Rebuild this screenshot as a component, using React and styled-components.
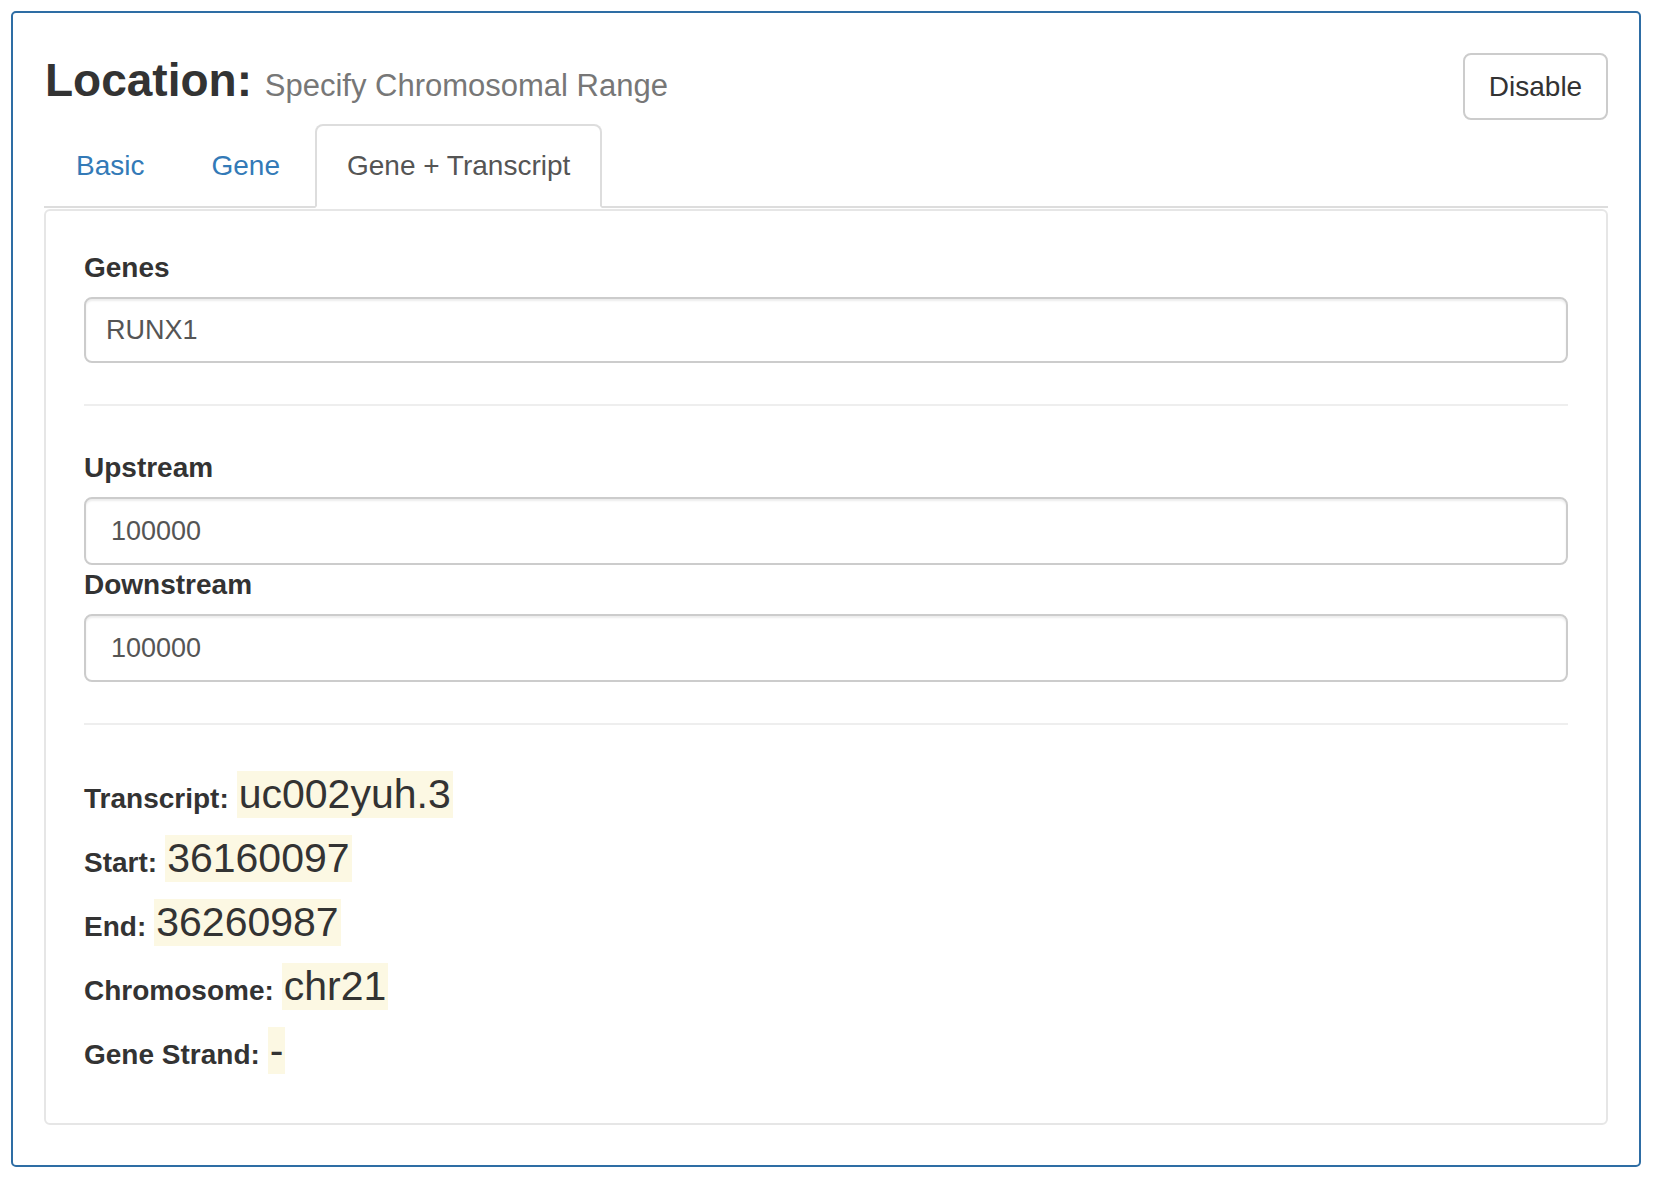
import React from 'react';
import styled, { createGlobalStyle } from 'styled-components';

const GlobalStyle = createGlobalStyle`
  body {
    margin: 0;
    background: #fff;
    font-family: "Liberation Sans", Arial, sans-serif;
    color: #333;
  }
  * { box-sizing: border-box; }
`;

const rows = [
  { label: 'Transcript:', value: 'uc002yuh.3' },
  { label: 'Start:', value: '36160097' },
  { label: 'End:', value: '36260987' },
  { label: 'Chromosome:', value: 'chr21' },
  { label: 'Gene Strand:', value: '-' },
];

export default function App() {
  return (
    <>
      <GlobalStyle />
      <Box>
        <Header>
          <Title>
            Location: <Small>Specify Chromosomal Range</Small>
          </Title>
          <Button type="button">Disable</Button>
        </Header>

        <Tabs>
          <Tab><TabLink href="#">Basic</TabLink></Tab>
          <Tab><TabLink href="#">Gene</TabLink></Tab>
          <Tab><TabLink href="#" $active>Gene + Transcript</TabLink></Tab>
        </Tabs>

        <Panel>
          <Label>Genes</Label>
          <Input defaultValue="RUNX1" />

          <Divider />

          <Label>Upstream</Label>
          <Input defaultValue="100000" $num />
          <Label>Downstream</Label>
          <Input defaultValue="100000" $num />

          <Divider />

          <Details>
            {rows.map((r) => (
              <Row key={r.label}>
                <b>{r.label}</b>
                <Mark>{r.value}</Mark>
              </Row>
            ))}
          </Details>
        </Panel>
      </Box>
    </>
  );
}

const Box = styled.div`
  margin: 11px 15px 0 11px;
  border: 2px solid #2e6da4;
  border-radius: 5px;
  padding: 40px 31px 40px 31px;
`;

const Header = styled.div`
  display: flex;
  justify-content: space-between;
  align-items: flex-start;
`;

const Title = styled.h3`
  margin: 2px 0 0 1px;
  font-size: 46px;
  line-height: 50px;
  font-weight: bold;
  color: #333;
`;

const Small = styled.small`
  font-size: 31px;
  font-weight: normal;
  color: #777;
`;

const Button = styled.button`
  width: 145px;
  height: 67px;
  font-family: inherit;
  font-size: 28px;
  color: #333;
  background: #fff;
  border: 2px solid #ccc;
  border-radius: 8px;
  cursor: pointer;
`;

const Tabs = styled.ul`
  display: flex;
  list-style: none;
  margin: 4px 0 0;
  padding: 0;
  border-bottom: 2px solid #ddd;
`;

const Tab = styled.li`
  margin: 0 3px -2px 0;
`;

const TabLink = styled.a`
  display: block;
  padding: 20px 30px;
  line-height: 40px;
  font-size: 28px;
  text-decoration: none;
  border: 2px solid ${(p) => (p.$active ? '#ddd' : 'transparent')};
  border-bottom-color: transparent;
  border-radius: 8px 8px 0 0;
  background: ${(p) => (p.$active ? '#fff' : 'transparent')};
  color: ${(p) => (p.$active ? '#555' : '#337ab7')};
`;

const Panel = styled.div`
  margin-top: 1px;
  border: 2px solid #e6e6e6;
  border-radius: 6px;
  padding: 37px 38px 32px;
`;

const Label = styled.label`
  display: block;
  font-weight: bold;
  font-size: 28px;
  line-height: 39px;
  margin-bottom: 10px;
  color: #333;
`;

const Input = styled.input`
  display: block;
  width: 100%;
  height: ${(p) => (p.$num ? '68px' : '66px')};
  padding: 0 ${(p) => (p.$num ? '25px' : '20px')};
  font-family: inherit;
  font-size: 27px;
  color: #555;
  border: 2px solid #ccc;
  border-radius: 8px;
  box-shadow: inset 0 2px 2px rgba(0, 0, 0, 0.075);
  outline: none;
`;

const Divider = styled.hr`
  margin: 41px 0 42px;
  border: 0;
  border-top: 2px solid #eee;
`;

const Details = styled.div`
  padding-top: 4px;
`;

const Row = styled.div`
  display: flex;
  align-items: baseline;
  gap: 8px;
  margin-bottom: 17px;
  font-size: 28px;
  color: #333;
`;

const Mark = styled.span`
  font-size: 41px;
  line-height: 43px;
  padding: 2px 2px;
  background: #fcf8e3;
  color: #333;
`;
